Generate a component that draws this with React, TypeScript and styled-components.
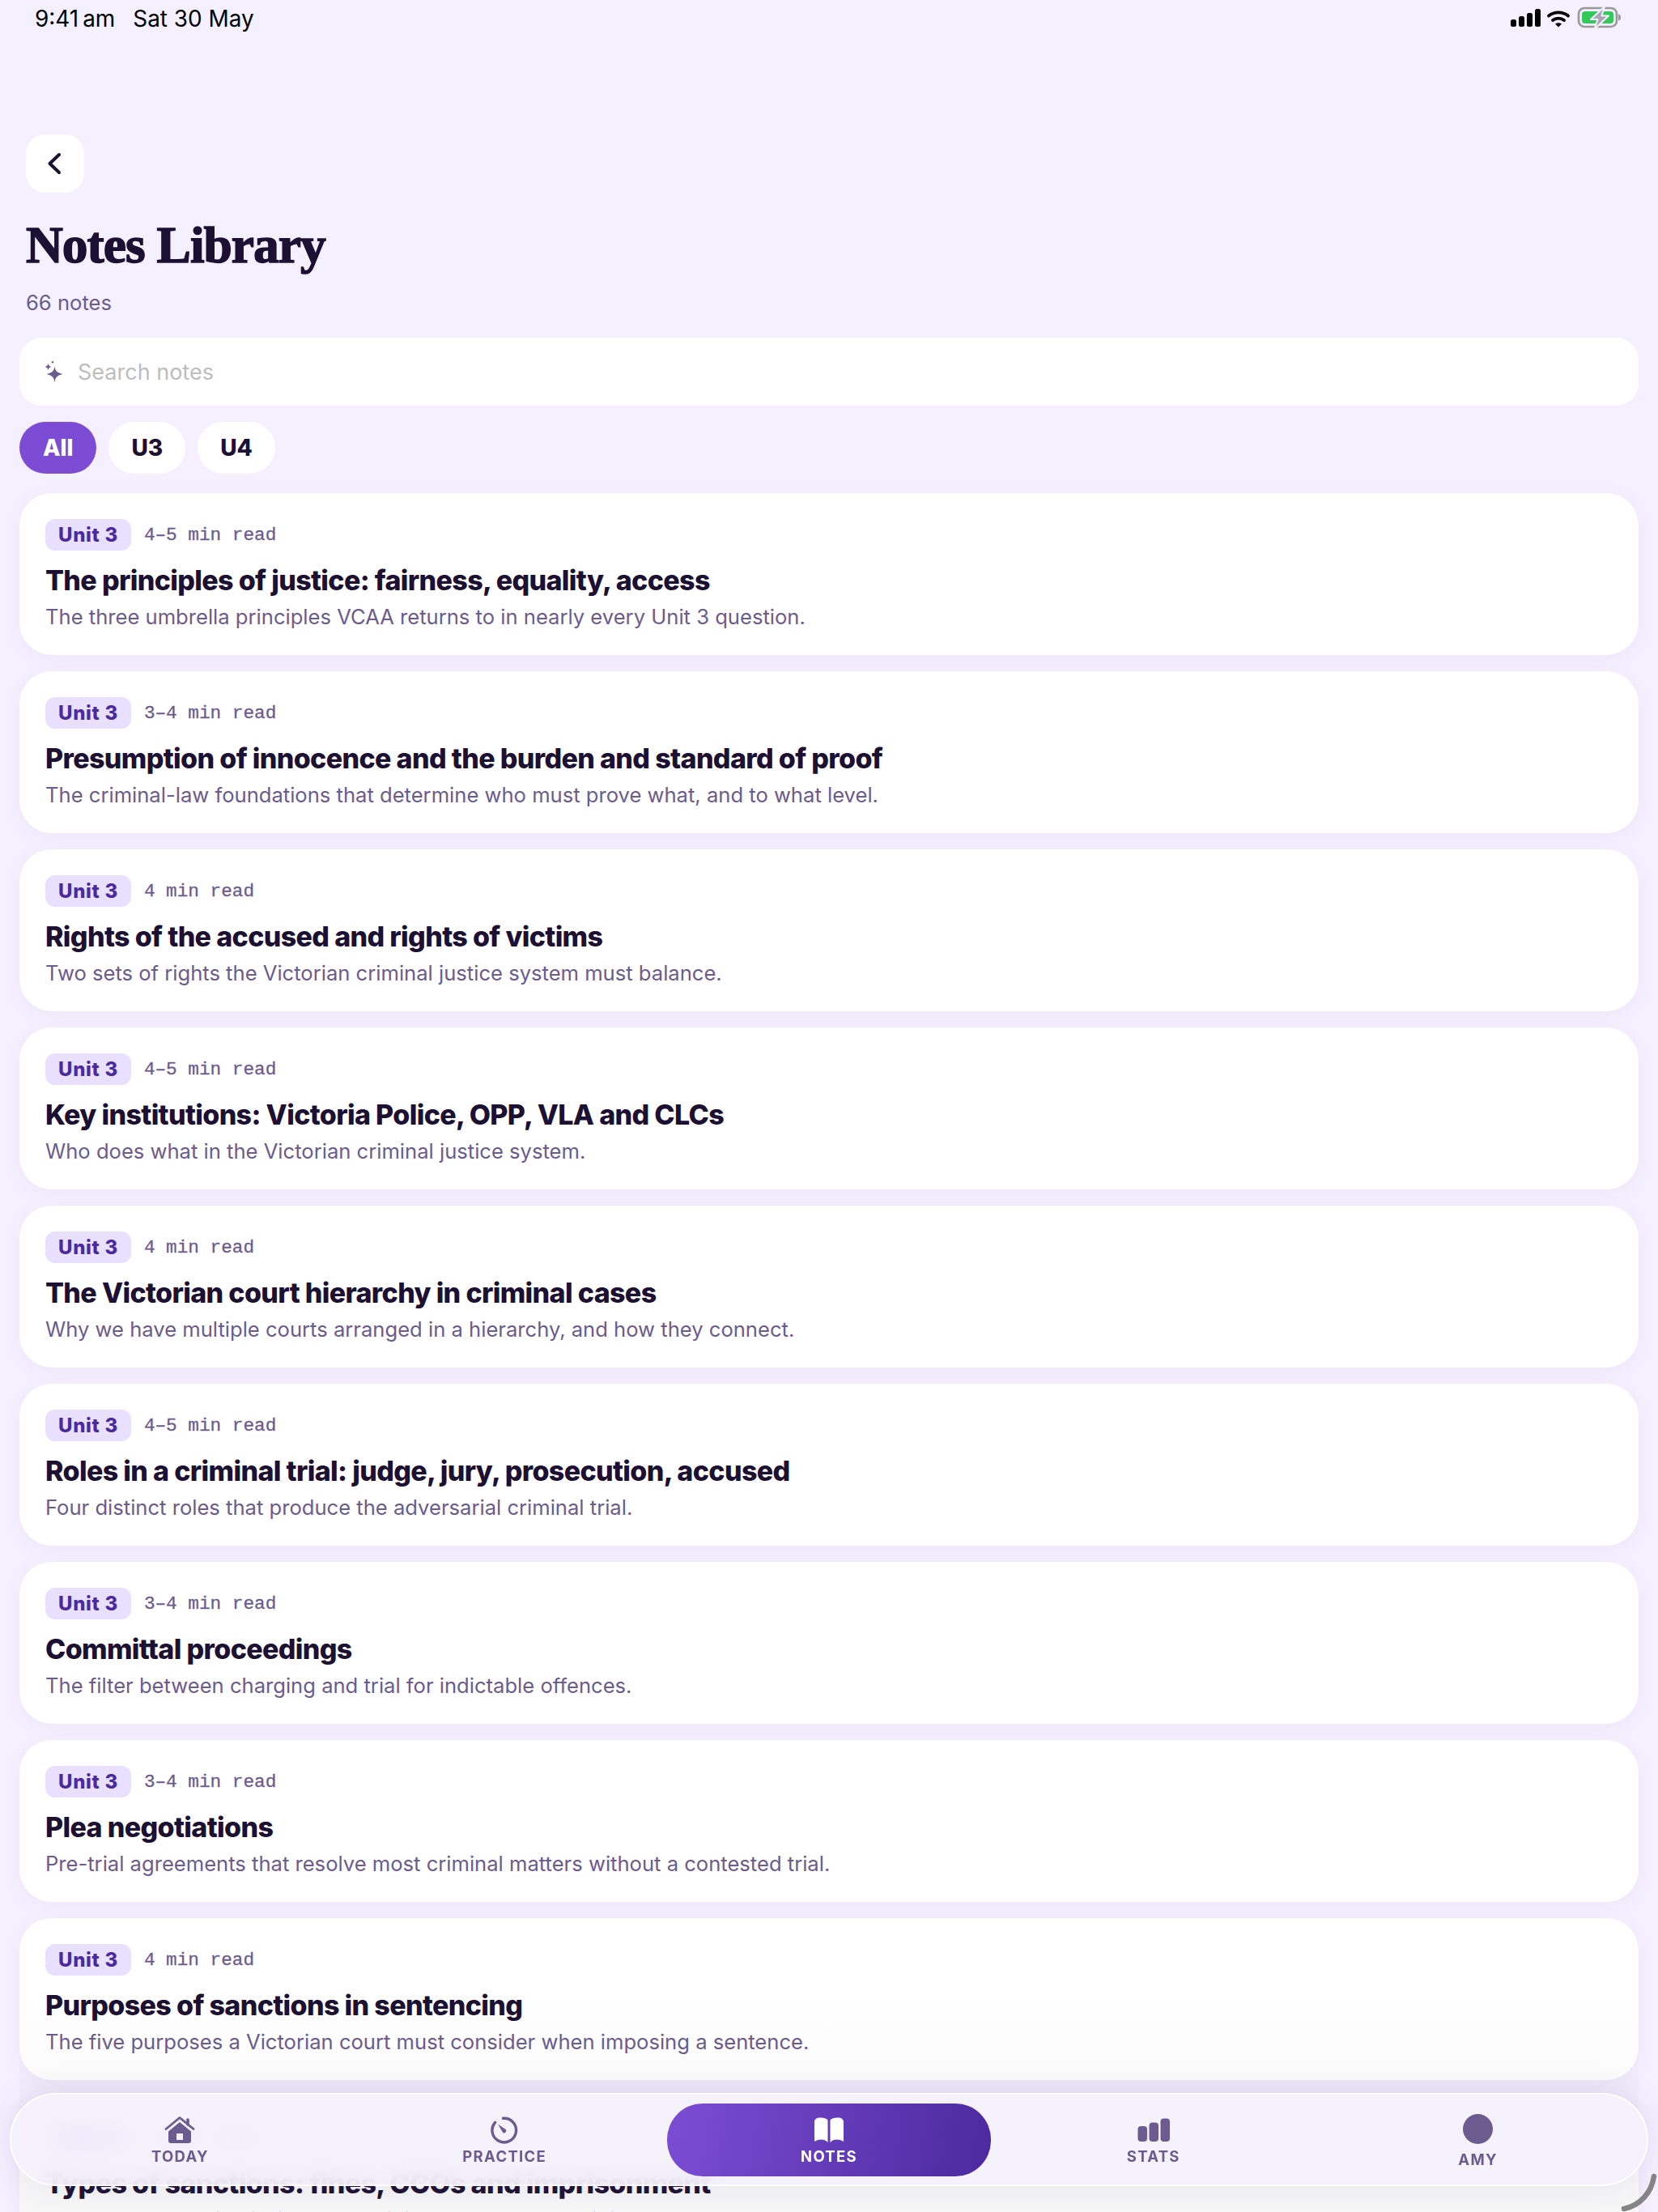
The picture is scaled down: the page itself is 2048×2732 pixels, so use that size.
import styled, { createGlobalStyle } from 'styled-components';

const ink = '#1c1033';
const muted = '#6b5b8e';

const notes = [
  { read: '4–5 min read', title: 'The principles of justice: fairness, equality, access', desc: 'The three umbrella principles VCAA returns to in nearly every Unit 3 question.' },
  { read: '3–4 min read', title: 'Presumption of innocence and the burden and standard of proof', desc: 'The criminal-law foundations that determine who must prove what, and to what level.' },
  { read: '4 min read', title: 'Rights of the accused and rights of victims', desc: 'Two sets of rights the Victorian criminal justice system must balance.' },
  { read: '4–5 min read', title: 'Key institutions: Victoria Police, OPP, VLA and CLCs', desc: 'Who does what in the Victorian criminal justice system.' },
  { read: '4 min read', title: 'The Victorian court hierarchy in criminal cases', desc: 'Why we have multiple courts arranged in a hierarchy, and how they connect.' },
  { read: '4–5 min read', title: 'Roles in a criminal trial: judge, jury, prosecution, accused', desc: 'Four distinct roles that produce the adversarial criminal trial.' },
  { read: '3–4 min read', title: 'Committal proceedings', desc: 'The filter between charging and trial for indictable offences.' },
  { read: '3–4 min read', title: 'Plea negotiations', desc: 'Pre-trial agreements that resolve most criminal matters without a contested trial.' },
  { read: '4 min read', title: 'Purposes of sanctions in sentencing', desc: 'The five purposes a Victorian court must consider when imposing a sentence.' },
  { read: '4 min read', title: 'Types of sanctions: fines, CCOs and imprisonment', desc: 'When each sanction is likely, what it involves, and what it is used for.' },
];

const HomeIcon = () => (
  <svg width="38" height="34" viewBox="0 0 38 34">
    <path d="M2 15.500 19 1.500l17 14" fill="none" stroke={muted} strokeWidth="2.800" strokeLinecap="round" strokeLinejoin="round" />
    <path d="M29 4v6" stroke={muted} strokeWidth="3.600" strokeLinecap="round" />
    <path fillRule="evenodd" fill={muted} d="M19 7 33 18.500V30a3 3 0 0 1-3 3H8a3 3 0 0 1-3-3V18.500ZM15 21v8h8v-8Z" />
  </svg>
);

const PracticeIcon = () => (
  <svg width="34" height="34" viewBox="0 0 34 34" fill="none">
    <path d="M15.500 2.300A14.800 14.800 0 1 1 5.600 7.300" stroke={muted} strokeWidth="3.400" strokeLinecap="round" />
    <path d="M9 9.500 19 16.200a2.800 2.800 0 0 1-3.800 3.800Z" fill={muted} />
  </svg>
);

const BookIcon = () => (
  <svg width="38" height="32" viewBox="0 0 38 32">
    <path fill="#fff" d="M17.500 4.500V31c-2.600-2.600-5.200-3.400-8-3.400-2.600 0-5 .7-8.500 2.400V6C1 2.400 3.600.5 8 .5c4.800 0 9.500 1 9.500 4Z" />
    <path fill="#fff" d="M20.500 4.500V31c2.600-2.600 5.200-3.400 8-3.400 2.600 0 5 .7 8.500 2.400V6c0-3.600-2.600-5.500-7-5.500-4.800 0-9.500 1-9.500 4Z" />
  </svg>
);

const StatsIcon = () => (
  <svg width="40" height="34" viewBox="0 0 40 34" fill={muted}>
    <rect x="0.500" y="12" width="11.500" height="19" rx="4" />
    <rect x="14.500" y="7.500" width="11.500" height="23.500" rx="4" />
    <rect x="28.500" y="2.500" width="11.500" height="28.500" rx="4" />
  </svg>
);

const SparkleIcon = () => (
  <svg width="24" height="28" viewBox="0 0 24 28" fill={muted}>
    <path d="M13.500 7.500c1 5.900 2.500 7.500 10 9.500-7.500 2-9 3.600-10 10.500-1-6.900-2.500-8.500-10-10.500 7.500-2 9-3.600 10-9.500Z" />
    <path d="M5.500 3.500c.5 3 1.200 3.700 4.500 4.500-3.300.8-4 1.500-4.500 4.500C5 9.500 4.300 8.800 1 8c3.300-.8 4-1.500 4.500-4.500Z" />
    <path d="M11 0c.3 1.500.7 1.900 2.200 2.200-1.500.3-1.900.7-2.200 2.200-.3-1.500-.7-1.900-2.200-2.200C10.300 1.900 10.700 1.500 11 0Z" />
  </svg>
);

export default function App() {
  return (
    <Screen>
      <GlobalStyle />
      <StatusBar>
        <StatusText>
          <span>{'9:41\u2009am'}</span>
          <span>Sat 30 May</span>
        </StatusText>
        <svg width="140" height="34" viewBox="0 0 140 34">
          <rect x="0" y="18" width="7" height="9" rx="2.500" fill="#000" />
          <rect x="10" y="14" width="7" height="13" rx="2.500" fill="#000" />
          <rect x="20" y="10" width="7" height="17" rx="2.500" fill="#000" />
          <rect x="30" y="5" width="7" height="22" rx="2.500" fill="#000" />
          <path d="M47 13.500c7-5.500 17-5.500 24 0M52 19c4-3.200 10-3.200 14 0" fill="none" stroke="#000" strokeWidth="3.800" strokeLinecap="round" />
          <path d="M55 23.500 59 27.500l4-4c-2.200-1.600-5.800-1.600-8 0Z" fill="#000" />
          <rect x="84" y="4" width="47" height="23" rx="7" fill="none" stroke="#999" strokeWidth="2.600" />
          <rect x="88" y="8" width="39" height="15" rx="4" fill="#34c759" />
          <path d="M133 11.500c2.400.5 3 2 3 4s-.6 3.500-3 4Z" fill="#999" />
          <path d="M116 2 99 18h8.500l-4 12 17.500-16.500h-8.500L116 2Z" fill="#aaa6b4" stroke="#f5f0ff" strokeWidth="2" strokeLinejoin="round" />
        </svg>
      </StatusBar>
      <Header>
        <BackButton aria-label="Back">
          <svg width="20" height="30" viewBox="0 0 20 30" fill="none">
            <path d="M15 4 3.500 15 15 26" stroke={ink} strokeWidth="4" strokeLinecap="round" strokeLinejoin="round" />
          </svg>
        </BackButton>
        <Title>Notes Library</Title>
        <Count>66 notes</Count>
      </Header>
      <SearchBar>
        <SparkleIcon />
        <SearchText>Search notes</SearchText>
      </SearchBar>
      <Filters>
        <Pill $active>All</Pill>
        <Pill>U3</Pill>
        <Pill>U4</Pill>
      </Filters>
      <List>
        {notes.map((n) => (
          <Card key={n.title}>
            <Meta>
              <Badge>Unit 3</Badge>
              <ReadTime>{n.read}</ReadTime>
            </Meta>
            <CardTitle>{n.title}</CardTitle>
            <CardDesc>{n.desc}</CardDesc>
          </Card>
        ))}
      </List>
      <BottomFade />
      <TabBar>
        <Tab><HomeIcon /><TabLabel>TODAY</TabLabel></Tab>
        <Tab><PracticeIcon /><TabLabel>PRACTICE</TabLabel></Tab>
        <Tab $active><BookIcon /><TabLabel $active>NOTES</TabLabel></Tab>
        <Tab><StatsIcon /><TabLabel>STATS</TabLabel></Tab>
        <Tab><Avatar /><TabLabel $lower>AMY</TabLabel></Tab>
      </TabBar>
      <CornerArc width="46" height="48" viewBox="0 0 46 48" fill="none">
        <path d="M41 4C38 24 24 40 4 44" stroke="#858585" strokeWidth="6.500" strokeLinecap="round" />
      </CornerArc>
    </Screen>
  );
}

const GlobalStyle = createGlobalStyle`
  html, body {
    margin: 0;
    background: #f5f0ff;
  }
  * {
    box-sizing: border-box;
  }
`;

const Screen = styled.div`
  position: relative;
  width: 2048px;
  height: 2732px;
  overflow: hidden;
  background: #f5f0ff;
  font-family: Inter, 'Liberation Sans', sans-serif;
  color: ${ink};
`;

const StatusBar = styled.div`
  height: 166px;
  padding: 6px 42px 0 43px;
  display: flex;
  justify-content: space-between;
  align-items: flex-start;
`;

const StatusText = styled.div`
  display: flex;
  gap: 22px;
  font-size: 27.900px;
  line-height: 34px;
  color: #000;
`;

const Header = styled.div`
  padding: 0 32px;
`;

const BackButton = styled.button`
  width: 72px;
  height: 72px;
  border: 0;
  border-radius: 24px;
  background: #fff;
  display: flex;
  align-items: center;
  justify-content: center;
  padding: 0;
`;

const Title = styled.h1`
  margin: 30px 0 0;
  font-family: 'Liberation Serif', serif;
  font-weight: 700;
  font-size: 63.500px;
  line-height: 70px;
  letter-spacing: -1px;
  -webkit-text-stroke: 1.500px ${ink};
  color: ${ink};
`;

const Count = styled.div`
  margin-top: 19px;
  font-size: 25.600px;
  line-height: 34px;
  color: ${muted};
`;

const SearchBar = styled.div`
  margin: 26px 24px 0;
  height: 84px;
  padding: 0 30px;
  border-radius: 28px;
  background: #fff;
  display: flex;
  align-items: center;
  gap: 18px;
`;

const SearchText = styled.span`
  font-size: 27px;
  color: #bdbdbd;
`;

const Filters = styled.div`
  margin: 20px 24px 0;
  display: flex;
  gap: 15px;
`;

const Pill = styled.div<{ $active?: boolean }>`
  height: 64px;
  padding: 0 ${(p) => (p.$active ? 29 : 28)}px;
  border-radius: 32px;
  display: flex;
  align-items: center;
  font-size: 28px;
  font-weight: 800;
  background: ${(p) => (p.$active ? '#7c4dd4' : '#fff')};
  color: ${(p) => (p.$active ? '#fff' : ink)};
`;

const List = styled.div`
  margin: 24px 24px 0;
  display: flex;
  flex-direction: column;
  gap: 20px;
`;

const Card = styled.div`
  height: 200px;
  flex-shrink: 0;
  padding: 32px 32px 0;
  border-radius: 40px;
  background: #fff;
  box-shadow: 0 4px 24px rgba(76, 46, 140, 0.05);
`;

const Meta = styled.div`
  display: flex;
  align-items: center;
  gap: 16px;
`;

const Badge = styled.span`
  height: 39px;
  padding: 0 16px;
  border-radius: 12px;
  background: #e9dfff;
  color: #4c2a9e;
  display: flex;
  align-items: center;
  font-size: 24px;
  font-weight: 800;
  letter-spacing: 0.700px;
`;

const ReadTime = styled.span`
  font-family: 'Liberation Mono', monospace;
  font-size: 22.700px;
  -webkit-text-stroke: 0.300px ${muted};
  color: ${muted};
`;

const CardTitle = styled.div`
  margin-top: 15px;
  font-size: 34px;
  line-height: 44px;
  font-weight: 800;
  letter-spacing: -0.640px;
  color: ${ink};
`;

const CardDesc = styled.div`
  margin-top: 5px;
  font-size: 25.600px;
  line-height: 36px;
  color: ${muted};
`;

const BottomFade = styled.div`
  position: absolute;
  left: 24px;
  right: 24px;
  bottom: 0;
  height: 280px;
  background: linear-gradient(to bottom, rgba(90, 90, 90, 0), rgba(90, 90, 90, 0.05));
`;

const TabBar = styled.nav`
  position: absolute;
  left: 12px;
  right: 12px;
  bottom: 32px;
  height: 115px;
  padding: 0 8px;
  border-radius: 57px;
  border: 2px solid rgba(255, 255, 255, 0.75);
  background: rgba(245, 241, 252, 0.9);
  backdrop-filter: blur(12px);
  box-shadow: 0 0 40px rgba(60, 40, 120, 0.1);
  display: grid;
  grid-template-columns: repeat(5, 1fr);
  align-items: center;
`;

const Tab = styled.div<{ $active?: boolean }>`
  height: 90px;
  padding-top: 16px;
  border-radius: 44px;
  display: flex;
  flex-direction: column;
  align-items: center;
  justify-content: flex-start;
  gap: 6px;
  background: ${(p) => (p.$active ? 'linear-gradient(100deg, #7c4dd4, #4c2a9e)' : 'transparent')};
  & > svg {
    height: 34px;
    flex-shrink: 0;
  }
`;

const TabLabel = styled.span<{ $active?: boolean; $lower?: boolean }>`
  font-size: 18.500px;
  line-height: 18px;
  font-weight: 700;
  letter-spacing: 1.300px;
  margin-top: ${(p) => (p.$lower ? 4 : 0)}px;
  color: ${(p) => (p.$active ? '#fff' : muted)};
`;

const Avatar = styled.div`
  width: 37px;
  height: 37px;
  margin-top: -3px;
  border-radius: 50%;
  background: ${muted};
`;

const CornerArc = styled.svg`
  position: absolute;
  right: 0;
  bottom: 0;
`;
